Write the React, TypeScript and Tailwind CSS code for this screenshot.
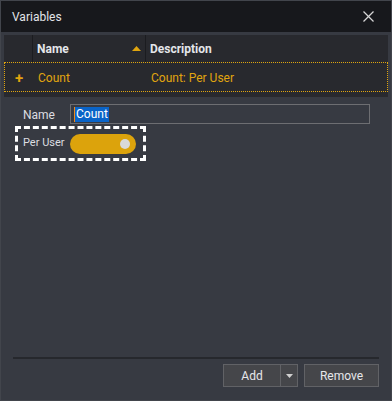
import React from "react";

const font = { fontFamily: 'Roboto, "Noto Sans", Arial, sans-serif' };

function CloseIcon() {
  return (
    <svg width="11" height="11" viewBox="0 0 11 11" fill="none" stroke="#d6d6d6" strokeWidth="1.3">
      <line x1="0.5" y1="0.5" x2="10.5" y2="10.5" />
      <line x1="10.5" y1="0.5" x2="0.5" y2="10.5" />
    </svg>
  );
}

export default function App() {
  return (
    <div
      className="w-[392px] h-[401px] bg-[#373a42] border border-[#42454c] flex flex-col text-[12px] overflow-hidden whitespace-nowrap"
      style={font}
    >
      {/* title bar */}
      <div className="h-[31px] shrink-0 bg-[#17181c] flex items-center justify-between pl-[11px] pr-[17px]">
        <span className="text-[#e2e4e8]">Variables</span>
        <CloseIcon />
      </div>

      {/* grid */}
      <div className="mx-[3px] mt-[3px] h-[62px] bg-[#28292e] flex flex-col">
        <div className="h-[27px] flex items-stretch font-bold text-[#e4e6ea]">
          <div className="w-[29px] border-r border-[#1b1c20]" />
          <div className="w-[113px] flex items-center justify-between pl-[4px] pr-[4px] border-r border-[#1b1c20]">
            <span>Name</span>
            <svg width="9" height="5" viewBox="0 0 9 5">
              <polygon points="0,5 4.5,0 9,5" fill="#e0a50f" />
            </svg>
          </div>
          <div className="flex items-center pl-[4px]">Description</div>
        </div>
        <div className="h-[30px] flex items-center border border-dotted border-[#e0a50f] text-[#e0a50f] pt-[2px]">
          <span className="w-[29px] pl-[10px] font-bold text-[15px] leading-none">+</span>
          <span className="w-[113px] pl-[4px]">Count</span>
          <span className="pl-[4px]">Count: Per User</span>
        </div>
      </div>

      {/* form */}
      <div className="flex flex-col mt-[7px]">
        <div className="flex items-center h-[20px]">
          <span className="w-[69px] pl-[22px] pt-[2px] text-[#dcdde0]">Name</span>
          <div className="w-[300px] h-[20px] border border-[#6d6e72] flex items-center pl-[3px]">
            <span className="border-l border-[#f08a1c] bg-[#0a64c8] text-white px-[1px] leading-[15px]">Count</span>
          </div>
        </div>
        <div className="ml-[14px] mt-[2px] w-[131px] h-[35px] border-[3px] border-dashed border-white flex items-center">
          <span className="w-[52px] pl-[5px] text-[11px] text-[#dcdde0]">Per User</span>
          <div className="w-[66px] h-[20px] rounded-full bg-[#dca30c] flex items-center justify-end pr-[6px]">
            <div className="w-[10px] h-[10px] rounded-full bg-[#d9d9d9]" />
          </div>
        </div>
      </div>

      <div className="flex-1" />

      {/* footer */}
      <div className="mx-[12px] border-t-2 border-[#26282d]" />
      <div className="flex justify-end gap-[6px] pr-[12px] pt-[5px] pb-[13px] text-[#e6e7ea]">
        <div className="flex h-[23px] border border-[#616266] bg-[#45464a]">
          <div className="w-[57px] flex items-center justify-center border-r border-[#616266] pt-[1px]">Add</div>
          <div className="w-[16px] flex items-center justify-center">
            <svg width="7" height="4" viewBox="0 0 7 4">
              <polygon points="0,0 7,0 3.5,4" fill="#d0d0d0" />
            </svg>
          </div>
        </div>
        <div className="w-[75px] h-[23px] border border-[#616266] bg-[#45464a] flex items-center justify-center pt-[1px]">
          Remove
        </div>
      </div>
    </div>
  );
}
